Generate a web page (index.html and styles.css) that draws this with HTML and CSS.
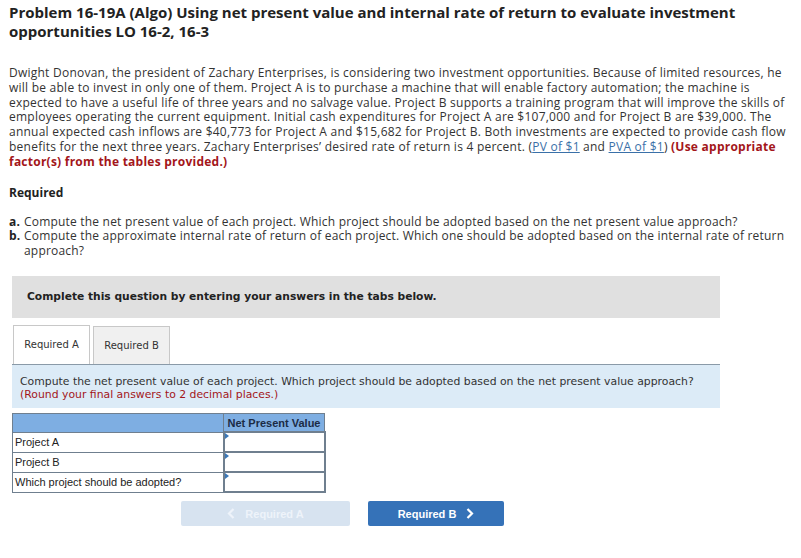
FILE: index.html
```html
<!DOCTYPE html>
<html>
<head>
<meta charset="utf-8">
<link rel="stylesheet" href="styles.css">
</head>
<body>
<h1 class="title">Problem 16-19A (Algo) Using net present value and internal rate of return to evaluate investment opportunities LO 16-2, 16-3</h1>
<p class="intro">Dwight Donovan, the president of Zachary Enterprises, is considering two investment opportunities. Because of limited resources, he will be able to invest in only one of them. Project A is to purchase a machine that will enable factory automation; the machine is expected to have a useful life of three years and no salvage value. Project B supports a training program that will improve the skills of employees operating the current equipment. Initial cash expenditures for Project A are $107,000 and for Project B are $39,000. The annual expected cash inflows are $40,773 for Project A and $15,682 for Project B. Both investments are expected to provide cash flow benefits for the next three years. Zachary Enterprises’ desired rate of return is 4 percent. (<a class="link" href="#">PV of $1</a> and <a class="link" href="#">PVA of $1</a>) <strong class="warn">(Use appropriate factor(s) from the tables provided.)</strong></p>
<div class="req">Required</div>
<ol class="tasks">
<li><b>a.</b><span>Compute the net present value of each project. Which project should be adopted based on the net present value approach?</span></li>
<li><b>b.</b><span>Compute the approximate internal rate of return of each project. Which one should be adopted based on the internal rate of return approach?</span></li>
</ol>
<div class="notice">Complete this question by entering your answers in the tabs below.</div>
<div class="tabs">
<div class="tab active">Required A</div>
<div class="tab">Required B</div>
</div>
<div class="panel">
<div>Compute the net present value of each project. Which project should be adopted based on the net present value approach?</div>
<div class="panel-red">(Round your final answers to 2 decimal places.)</div>
</div>
<table class="grid">
<tr class="head"><th class="lab"></th><th class="val">Net Present Value</th></tr>
<tr><td class="lab">Project A</td><td class="inp"></td></tr>
<tr><td class="lab">Project B</td><td class="inp"></td></tr>
<tr><td class="lab">Which project should be adopted?</td><td class="inp"></td></tr>
</table>
<div class="nav">
<div class="btn disabled"><svg class="chev" width="8" height="11" viewBox="0 0 8 11"><path d="M6.5 1 L2 5.5 L6.5 10" fill="none" stroke="currentColor" stroke-width="2.2"/></svg><span>Required A</span></div>
<div class="btn primary"><span>Required B</span><svg class="chev" width="8" height="11" viewBox="0 0 8 11"><path d="M1.5 1 L6 5.5 L1.5 10" fill="none" stroke="currentColor" stroke-width="2.2"/></svg></div>
</div>
</body>
</html>
```
FILE: styles.css
```css
body {
  margin: 0;
  padding: 0 4px 0 9px;
  font-family: "Open Sans", "Liberation Sans", sans-serif;
  color: #333;
  background: #fff;
}
.title {
  margin: 3px 0 0;
  font-size: 15px;
  line-height: 19px;
  font-weight: 700;
  color: #222;
}
.intro {
  margin: 25px 0 0;
  font-size: 12px;
  letter-spacing: 0.24px;
  line-height: 14.8px;
  color: #333;
}
.link {
  color: #3a70a8;
  text-decoration: underline;
}
.warn {
  color: #a3161a;
  font-weight: 700;
}
.req {
  margin-top: 15px;
  font-size: 12px;
  font-weight: 700;
  color: #222;
  line-height: 15px;
}
.tasks {
  list-style: none;
  margin: 15px 0 0;
  padding: 0;
  font-size: 12px;
  letter-spacing: 0.2px;
  line-height: 14.8px;
}
.tasks li {
  display: flex;
}
.tasks li b {
  width: 15px;
  flex: none;
  color: #222;
}
.notice {
  margin: 17px 0 0 3px;
  width: 708px;
  height: 42px;
  box-sizing: border-box;
  padding: 0 15px;
  display: flex;
  align-items: center;
  background: #e0e0e0;
  font-family: "DejaVu Sans", Verdana, sans-serif;
  font-weight: 700;
  font-size: 10.7px;
  color: #222;
}
.tabs {
  display: flex;
  gap: 3px;
  margin: 7px 0 0 4px;
  height: 39px;
  align-items: flex-end;
}
.tab {
  width: 77px;
  height: 38px;
  box-sizing: border-box;
  display: flex;
  align-items: center;
  justify-content: center;
  border: 1px solid #c8c8c8;
  border-bottom: none;
  background: #f0f0f0;
  font-family: "DejaVu Sans", Verdana, sans-serif;
  font-size: 10px;
  color: #333;
}
.tab.active {
  height: 39px;
  background: #fff;
  border-color: #c8c8c8;
}
.panel {
  margin-left: 3px;
  width: 708px;
  height: 44px;
  box-sizing: border-box;
  border-top: 1px solid #8a9aa8;
  background: #dcebf7;
  padding: 10px 8px 0;
  font-family: "DejaVu Sans", Verdana, sans-serif;
  font-size: 10.85px;
  line-height: 13px;
  color: #333;
}
.panel-red {
  color: #a3161a;
}
.grid {
  margin: 5px 0 0 3px;
  border-collapse: collapse;
  font-family: "Liberation Sans", Arial, sans-serif;
  font-size: 11px;
  color: #222;
}
.grid td, .grid th {
  border: 1px solid #6f7f8f;
  height: 20px;
  padding: 0 0 0 2px;
  box-sizing: border-box;
}
.grid .head th {
  background: #7eaee2;
  height: 19px;
}
.grid .lab {
  width: 211px;
  text-align: left;
  font-weight: 400;
}
.grid th.val {
  width: 101px;
  text-align: center;
  font-weight: 700;
  color: #1b2b45;
  padding: 0;
}
.grid td.inp {
  position: relative;
  border: 2px solid #6f7f8f;
  background: #fff;
}
.grid td.inp::before {
  content: "";
  position: absolute;
  left: 0;
  top: 0;
  border-left: 4px solid #3a78b8;
  border-top: 3px solid transparent;
  border-bottom: 3px solid transparent;
}
.nav {
  display: flex;
  gap: 18px;
  margin: 8px 0 0 172px;
}
.btn {
  height: 25px;
  display: flex;
  align-items: center;
  justify-content: center;
  gap: 10px;
  font-family: "Liberation Sans", Arial, sans-serif;
  font-weight: 700;
  font-size: 11px;
  color: #fff;
  border-radius: 2px;
}
.btn.disabled {
  width: 169px;
  background: #d7e3f0;
  color: #eef3fa;
}
.btn.primary {
  width: 136px;
  background: #3572b8;
}
.chev {
  display: block;
}
```
